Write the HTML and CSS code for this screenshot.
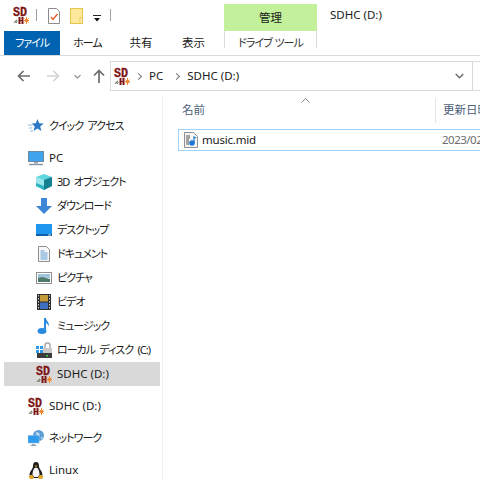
FILE: index.html
```html
<!DOCTYPE html>
<html lang="ja">
<head>
    <meta charset="UTF-8">
    <title>SDHC (D:)</title>
    <link rel="stylesheet" href="styles.css">
</head>
<body>

    <svg class="defs" width="0" height="0">
        <symbol id="sd" viewBox="0 0 16 18">
            <text x="0" y="9.5" class="sd-text" textLength="14" lengthAdjust="spacingAndGlyphs">SD</text>
            <path d="M0.500 16.500l3-3 1 1-2.500 2.500z" fill="#7d7d6c"/>
            <path d="M3 17l1.500-1.500" stroke="#5a8a50"/>
            <path d="M5.500 11h2v7h-2zM8.500 11h2v7h-2zM7 14h2v1H7z" fill="#7d1414"/>
            <path d="M13.500 11v7M11 14.500h5M11.500 12.500l4 4M15.500 12.500l-4 4" stroke="#ee8a33" stroke-width="1"/>
        </symbol>
    </svg>

    <header class="titlebar">
        <div class="quick">
            <svg class="logo" width="16" height="18"><use href="#sd"/></svg>
            <span class="sep"></span>
            <svg class="qa-prop" width="12" height="16" viewBox="0 0 12 16">
                <path d="M.5.500h8l3 3v12H.500z" fill="#fff" stroke="#8c8c8c"/>
                <path d="M3 9l2 2.500L9.500 6" fill="none" stroke="#e8602c" stroke-width="1.400"/>
            </svg>
            <svg class="qa-folder" width="13" height="16" viewBox="0 0 13 16">
                <rect x=".5" y=".5" width="12" height="15" fill="#fde99c" stroke="#e8c550"/>
                <rect x="10" y="10" width="2.500" height="5.500" fill="#fff3c4" stroke="#e8c550"/>
            </svg>
            <svg class="qa-more" width="8" height="7" viewBox="0 0 8 7">
                <path d="M0 .500h8" stroke="#222"/>
                <path d="M1 3h6L4 6.500z" fill="#111"/>
            </svg>
            <span class="sep sep-last"></span>
        </div>
        <div class="tool-tab">管理</div>
        <div class="win-title">SDHC (D:)</div>
    </header>

    <nav class="tabs">
        <div class="tab tab-file ja">ファイル</div>
        <div class="tab tab-home ja">ホーム</div>
        <div class="tab tab-share">共有</div>
        <div class="tab tab-view">表示</div>
        <div class="tab-tool ja">ドライブ ツール</div>
    </nav>

    <div class="addressrow">
        <div class="navbtns">
            <svg width="13" height="12" viewBox="0 0 13 12"><path d="M13 6H2M6.500 1L1.500 6l5 5" fill="none" stroke="#6d6d6d" stroke-width="1.700"/></svg>
            <svg class="nav-fwd" width="13" height="12" viewBox="0 0 13 12"><path d="M0 6h11M6.500 1l5 5-5 5" fill="none" stroke="#d4d4d4" stroke-width="1.700"/></svg>
            <svg class="nav-down" width="7" height="5" viewBox="0 0 7 5"><path d="M.5 1l3 3 3-3" fill="none" stroke="#9a9a9a" stroke-width="1.300"/></svg>
            <svg class="nav-up" width="12" height="14" viewBox="0 0 12 14"><path d="M6 14V2M1 6.500l5-5 5 5" fill="none" stroke="#6d6d6d" stroke-width="1.700"/></svg>
        </div>
        <div class="addressbox">
            <svg class="logo" width="16" height="18"><use href="#sd"/></svg>
            <span class="crumb-arrow"></span>
            <span class="crumb">PC</span>
            <span class="crumb-arrow"></span>
            <span class="crumb">SDHC (D:)</span>
            <div class="addr-end">
                <svg width="9" height="6" viewBox="0 0 9 6"><path d="M.7 1l3.800 3.800L8.300 1" fill="none" stroke="#6d6d6d" stroke-width="1.500"/></svg>
            </div>
        </div>
    </div>

    <main class="main">
        <aside class="sidebar">
            <div class="row top quick-access">
                <svg width="16" height="16" viewBox="0 0 16 16">
                    <path d="M9.500 1l1.700 4.300 4.500.3-3.500 2.900 1.200 4.500-3.900-2.500-3.900 2.500 1.200-4.500-3.200-2.900 4.200-.3z" fill="#2a78c8"/>
                    <path d="M0 7h4M1 10h3M2 13h3" stroke="#8cbde8"/>
                </svg>
                <span class="ja">クイック アクセス</span>
            </div>

            <div class="row top pc-row">
                <svg width="16" height="16" viewBox="0 0 16 16">
                    <rect x=".5" y="1.500" width="15" height="10" fill="#3fa3ee" stroke="#6d8aa5"/>
                    <path d="M6 12h4v1.500H6z" fill="#9aa8b5"/>
                    <path d="M1 14.500h14" stroke="#8595a5" stroke-width="1.400"/>
                </svg>
                <span>PC</span>
            </div>

            <div class="row child">
                <svg width="16" height="16" viewBox="0 0 16 16">
                    <path d="M8 0l8 3v9l-8 4-8-4V3z" fill="#5fd6dc"/>
                    <path d="M8 6l8-3v9l-8 4z" fill="#167f92"/>
                    <path d="M0 3l8 3v10l-8-4z" fill="#9be8ea"/>
                    <path d="M0 9l8 3v4l-8-4z" fill="#2fb4c4"/>
                </svg>
                <span class="ja">3D オブジェクト</span>
            </div>
            <div class="row child">
                <svg width="16" height="16" viewBox="0 0 16 16"><path d="M5 0h6v8h5l-8 8-8-8h5z" fill="#3d87d6"/></svg>
                <span class="ja">ダウンロード</span>
            </div>
            <div class="row child">
                <svg width="16" height="16" viewBox="0 0 16 16">
                    <rect y="2" width="16" height="12" fill="#1f97ee"/>
                    <rect y="12" width="16" height="2" fill="#0f5fa8"/>
                    <path d="M12 13h3" stroke="#cfe6f8"/>
                </svg>
                <span class="ja">デスクトップ</span>
            </div>
            <div class="row child">
                <svg width="16" height="16" viewBox="0 0 16 16">
                    <path d="M2.500.500h8l3 3v12h-11z" fill="#f8f8f8" stroke="#8f8f8f"/>
                    <path d="M4.500 5h4M4.500 7h7M4.500 9h7M4.500 11h7M4.500 13h7" stroke="#5a9ad0"/>
                </svg>
                <span class="ja">ドキュメント</span>
            </div>
            <div class="row child">
                <svg width="16" height="16" viewBox="0 0 16 16">
                    <rect x=".5" y="2.500" width="15" height="11" fill="#fff" stroke="#8f8f8f"/>
                    <rect x="2" y="4" width="12" height="4" fill="#9fc4dc"/>
                    <path d="M2 8l4-1 8 2v3H2z" fill="#4f7a6a"/>
                </svg>
                <span class="ja">ピクチャ</span>
            </div>
            <div class="row child">
                <svg width="16" height="16" viewBox="0 0 16 16">
                    <rect x="1" width="14" height="16" fill="#2d2d2d"/>
                    <rect x="4" y="1" width="8" height="6.500" fill="#c29a3a"/>
                    <rect x="4" y="8.500" width="8" height="6.500" fill="#3f6fc0"/>
                    <path d="M2.500 1v14M13.500 1v14" stroke="#cfcfcf" stroke-dasharray="1.500 1.500"/>
                </svg>
                <span class="ja">ビデオ</span>
            </div>
            <div class="row child">
                <svg width="16" height="16" viewBox="0 0 16 16">
                    <ellipse cx="6" cy="13" rx="4.500" ry="3" fill="#2a8ae0"/>
                    <path d="M8 13V0h2c0 3 3.500 4 3 8.500-.8-2-2-3-3-3.500v8z" fill="#2a8ae0"/>
                </svg>
                <span class="ja">ミュージック</span>
            </div>
            <div class="row child">
                <svg width="16" height="16" viewBox="0 0 16 16">
                    <path d="M0 4h3v3H0zM4 4h3v3H4zM0 8h3v3H0zM4 8h3v3H4z" fill="#2d9be8"/>
                    <path d="M9 7V3.500a2.500 2.500 0 0 1 5 0V7" fill="none" stroke="#a8a8a8" stroke-width="1.400"/>
                    <rect x="7" y="6" width="9" height="5" fill="#c9c9c9"/>
                    <rect x="1" y="11" width="15" height="5" fill="#3c3c3c"/>
                    <rect x="10" y="13" width="2" height="1.500" fill="#35d04a"/>
                </svg>
                <span class="ja">ローカル ディスク (C:)</span>
            </div>
            <div class="row child selected">
                <svg class="logo" width="16" height="18"><use href="#sd"/></svg>
                <span>SDHC (D:)</span>
            </div>

            <div class="row top drive-row">
                <svg class="logo" width="16" height="18"><use href="#sd"/></svg>
                <span>SDHC (D:)</span>
            </div>
            <div class="row top net-row">
                <svg width="16" height="16" viewBox="0 0 16 16">
                    <circle cx="10.500" cy="5.500" r="5.500" fill="#5f9fd8"/>
                    <path d="M8 2l3 1 1 3-3 1zM13 7l2 .5-2 2z" fill="#c8e0f2"/>
                    <rect y="5.500" width="11" height="7.500" fill="#2f9bee" stroke="#7ab8e8" stroke-width=".6"/>
                    <path d="M4 14h3v1H4zM2.500 15h6v1h-6z" fill="#9aa8b5"/>
                </svg>
                <span class="ja">ネットワーク</span>
            </div>
            <div class="row top linux-row">
                <svg width="16" height="17" viewBox="0 0 16 17">
                    <path d="M8 0c2.500 0 3 2 3 4.500 0 2 3.500 5 3.500 8.500L11 16H5l-3.500-3C1.500 9.500 5 6.500 5 4.500 5 2 5.500 0 8 0z" fill="#1c1c1c"/>
                    <path d="M8 5.500c2 0 3.500 3.500 3.500 7L10 15H6l-1.500-2.500C4.500 9 6 5.500 8 5.500z" fill="#f4f4f4"/>
                    <path d="M6.500 3.500h3L8 5z" fill="#e0a92a"/>
                    <path d="M.5 14.500l3.500-2 2 3-1 1.500H2zM15.500 14.500l-3.500-2-2 3 1 1.500h3z" fill="#e0a92a"/>
                </svg>
                <span>Linux</span>
            </div>
        </aside>

        <section class="files">
            <div class="columns">
                <svg class="sort-caret" width="9" height="5" viewBox="0 0 9 5"><path d="M.5 4.500l4-4 4 4" fill="none" stroke="#8a8a8a"/></svg>
                <div class="col col-name">名前</div>
                <div class="col col-date">更新日時</div>
            </div>
            <div class="filerow">
                <svg class="file-icon" width="14" height="16" viewBox="0 0 14 16">
                    <path d="M.5.500h9l4 4v11H.500z" fill="#f4f4f4" stroke="#8f8f8f"/>
                    <path d="M2 4h4M2 6h4M2 8h3M2 10h3M2 12h3" stroke="#555"/>
                    <circle cx="8" cy="11" r="2.800" fill="#1e78d0"/>
                    <path d="M10 11V5l2 1" fill="none" stroke="#1e78d0" stroke-width="1.200"/>
                </svg>
                <span class="file-name">music.mid</span>
                <span class="file-date">2023/02/</span>
            </div>
        </section>
    </main>

</body>
</html>
```

FILE: styles.css
```css
html, body {
    height: 100%;
}

body {
    margin: 0;
    width: 480px;
    height: 480px;
    overflow: hidden;
    background-color: #fff;
    color: #1a1a1a;
    font-family: "Noto Sans", "Noto Sans CJK JP", sans-serif;
    font-size: 11.5px;
    line-height: 16px;
    font-feature-settings: "palt";
}

.ja {
    font-size: 11px;
    letter-spacing: -1px;
    word-spacing: 2.500px;
}

svg {
    display: block;
    flex: none;
}

.defs {
    position: absolute;
}

.sd-text {
    font-family: "Liberation Mono", monospace;
    font-weight: bold;
    font-size: 13px;
    fill: #7d1414;
    stroke: #7d1414;
    stroke-width: .3px;
}

/* title row */
.titlebar {
    display: flex;
    height: 31px;
}

.quick {
    display: flex;
    align-items: flex-start;
    width: 224px;
    padding: 6px 0 0 13px;
    box-sizing: border-box;
}

.sep {
    width: 1px;
    height: 12px;
    margin: 3px 0 0 7px;
    background-color: #a0a0a0;
}

.qa-prop {
    margin: 2px 0 0 11px;
}

.qa-folder {
    margin: 2px 0 0 10px;
}

.qa-more {
    margin: 9px 0 0 10px;
}

.sep-last {
    margin-left: 9px;
}

.tool-tab {
    width: 93px;
    height: 27px;
    margin-top: 4px;
    background-color: #c3f09a;
    text-align: center;
    line-height: 28px;
}

.win-title {
    margin-left: 13px;
    line-height: 30px;
}

/* ribbon tabs */
.tabs {
    display: flex;
    height: 24px;
    padding-left: 4px;
    border-bottom: 1px solid #dadbdc;
}

.tab {
    height: 24px;
    line-height: 24px;
    text-align: center;
}

.tab-file {
    width: 56px;
    background-color: #0063b1;
    color: #fff;
}

.tab-home {
    width: 55px;
}

.tab-share {
    width: 52px;
}

.tab-view {
    width: 53px;
}

.tab-tool {
    height: 17px;
    width: 91px;
    margin-left: 4px;
    border-left: 1px solid #dadbdc;
    border-right: 1px solid #dadbdc;
    text-align: center;
    line-height: 24px;
    color: #333;
    word-spacing: 1px;
}

/* address */
.addressrow {
    display: flex;
    align-items: center;
    height: 40px;
}

.navbtns {
    display: flex;
    align-items: center;
    width: 110px;
    padding: 0 0 0 17px;
    box-sizing: border-box;
}

.nav-fwd {
    margin-left: 17px;
}

.nav-down {
    margin-left: 14px;
}

.nav-up {
    margin-left: 12px;
}

.addressbox {
    display: flex;
    align-items: center;
    flex: 1;
    height: 28px;
    padding-left: 3px;
    border: 1px solid #d9d9d9;
    border-right: none;
}

.crumb-arrow {
    width: 4px;
    height: 4px;
    margin: 0 8px 0 6px;
    border-top: 1.500px solid #777;
    border-right: 1.500px solid #777;
    transform: rotate(45deg);
}

.crumb {
    margin-right: 5px;
}

.addr-end {
    display: flex;
    align-items: center;
    justify-content: flex-end;
    height: 100%;
    margin-left: auto;
    width: 30px;
    padding-right: 8px;
    border-right: 1px solid #d9d9d9;
    margin-right: 7px;
    box-sizing: border-box;
}

/* main area */
.main {
    display: flex;
    height: 384px;
}

.sidebar {
    width: 158px;
    margin-right: 4px;
    padding: 18px 0 0 4px;
    border-right: 1px solid #f0f0f0;
}

.row {
    display: flex;
    align-items: center;
    gap: 5px;
    height: 24px;
    width: 156px;
    box-sizing: border-box;
    white-space: nowrap;
}

.top {
    padding-left: 24px;
}

.child {
    padding-left: 32px;
}

.pc-row {
    margin-top: 8px;
}

.drive-row,
.net-row,
.linux-row {
    margin-top: 8px;
}

.selected {
    background-color: #d9d9d9;
}

/* file list */
.files {
    flex: 1;
    min-width: 0;
    padding-left: 11px;
}

.columns {
    position: relative;
    display: flex;
    height: 33px;
    padding: 2px 0 0 4px;
    box-sizing: border-box;
}

.sort-caret {
    position: absolute;
    left: 123px;
    top: 2px;
}

.col {
    flex: none;
    height: 25px;
    line-height: 24px;
    color: #4c607a;
}

.col-name {
    width: 253px;
    border-right: 1px solid #e5e5e5;
}

.col-date {
    margin-left: 7px;
    white-space: nowrap;
}

.filerow {
    display: flex;
    align-items: center;
    height: 20px;
    padding-left: 5px;
    border-top: 1px solid #99d1ff;
    border-bottom: 1px solid #99d1ff;
    border-left: 1px solid #99d1ff;
    white-space: nowrap;
}

.file-name {
    flex: none;
    width: 240px;
    margin-left: 4px;
    letter-spacing: -.2px;
}

.file-date {
    color: #6d6d6d;
    letter-spacing: -.5px;
}
```
